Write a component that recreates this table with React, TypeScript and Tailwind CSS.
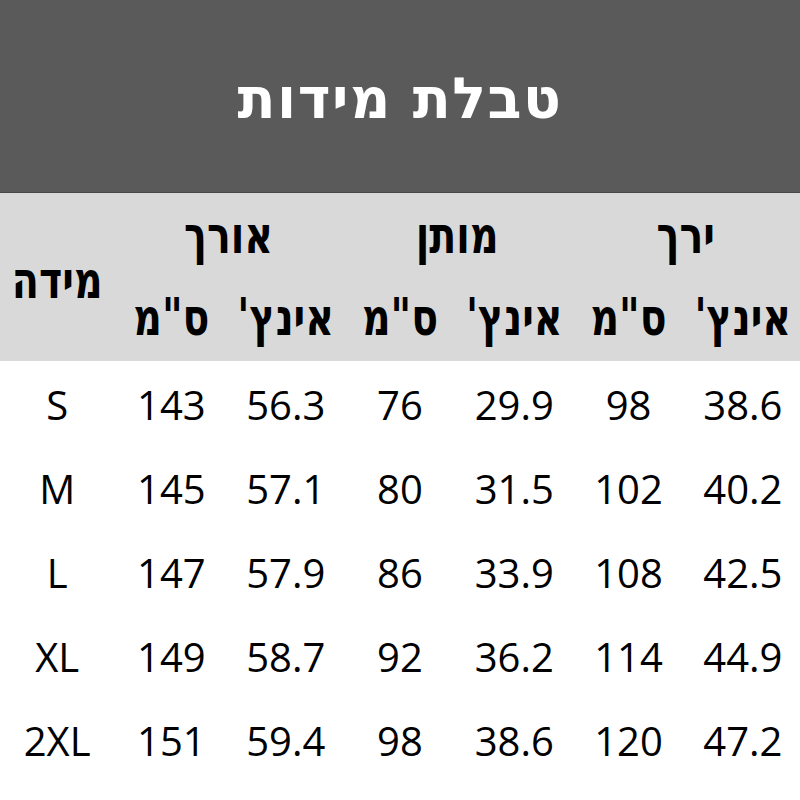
import React from "react";

const rows = [
  ["S", "143", "56.3", "76", "29.9", "98", "38.6"],
  ["M", "145", "57.1", "80", "31.5", "102", "40.2"],
  ["L", "147", "57.9", "86", "33.9", "108", "42.5"],
  ["XL", "149", "58.7", "92", "36.2", "114", "44.9"],
  ["2XL", "151", "59.4", "98", "38.6", "120", "47.2"],
];

const heb = { fontFamily: '"DejaVu Sans Condensed", "DejaVu Sans", sans-serif' };
const num = { fontFamily: '"Open Sans", "Noto Sans", sans-serif' };

function H({ children }: { children: React.ReactNode }) {
  return <span className="inline-block scale-y-[1.18]">{children}</span>;
}

export default function App() {
  return (
    <div className="w-[800px] h-[800px] bg-white overflow-hidden">
      <div className="h-[193px] bg-[#5a5a5a] border-b border-[#474747] flex items-center justify-center">
        <div dir="rtl" className="text-white font-bold text-[62px] tracking-[1.5px] leading-none pt-[6px] scale-y-[0.92]" style={heb}>
          טבלת מידות
        </div>
      </div>
      <div className="h-[168px] bg-[#d9d9d9] grid grid-cols-7 grid-rows-2 text-black font-bold text-[44px] leading-none" style={heb} dir="ltr">
        <div dir="rtl" className="row-span-2 col-start-1 row-start-1 flex items-center justify-center pt-[6px]"><H>מידה</H></div>
        <div dir="rtl" className="col-start-2 col-span-2 row-start-1 flex items-end justify-center pb-[20px]"><H>אורך</H></div>
        <div dir="rtl" className="col-start-4 col-span-2 row-start-1 flex items-end justify-center pb-[20px]"><H>מותן</H></div>
        <div dir="rtl" className="col-start-6 col-span-2 row-start-1 flex items-end justify-center pb-[20px]"><H>ירך</H></div>
        {["ס\"מ", "אינץ'", "ס\"מ", "אינץ'", "ס\"מ", "אינץ'"].map((t, i) => (
          <div key={i} dir="rtl" className="row-start-2 flex items-center justify-center pb-[4px]">
            <H>{t}</H>
          </div>
        ))}
      </div>
      <div className="pt-[2px]">
        {rows.map((r, i) => (
          <div key={i} className="grid grid-cols-7 h-[84px] items-center text-[40px] leading-none text-black" style={num}>
            {r.map((c, j) => (
              <div key={j} className="text-center">
                {c}
              </div>
            ))}
          </div>
        ))}
      </div>
    </div>
  );
}
